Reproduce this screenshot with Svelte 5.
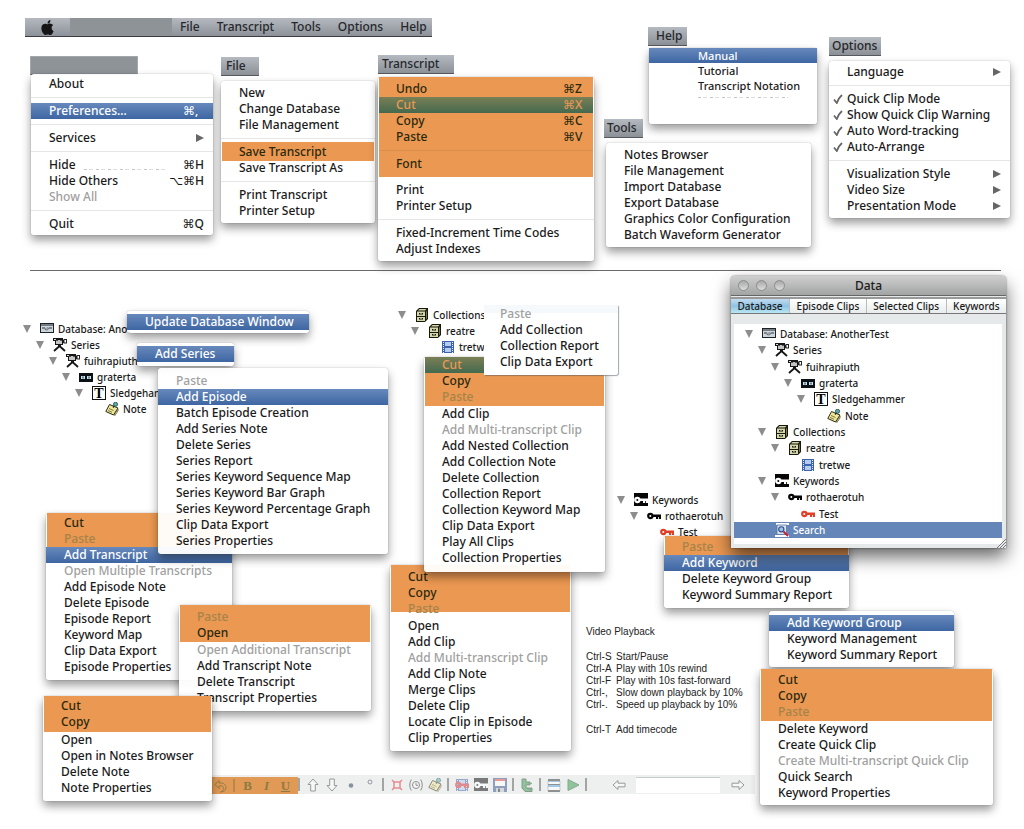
<script>
  const SEP = 'sep';
  const off = (t) => ({ t, off: true });
  const sel = (t, k) => ({ t, k, sel: true });
  const opens = (t) => ({ t, arrow: true });
  const tick = (t) => ({ t, tick: true });

  const titles = [
    { t: '', x: 30, y: 56, w: 108 },
    { t: 'File', x: 221, y: 57, w: 38, p: 5 },
    { t: 'Transcript', x: 378, y: 55, w: 76, p: 4 },
    { t: 'Help', x: 648, y: 27, w: 39, p: 8 },
    { t: 'Options', x: 829, y: 37, w: 52, p: 3 },
    { t: 'Tools', x: 604, y: 119, w: 39, p: 3 }
  ];

  const menus = [
    { name: 'Application', x: 31, y: 74, w: 182, groups: [{ top: 2, bottom: 3, items: [
      'About', SEP, sel('Preferences...', '⌘,'), SEP, opens('Services'), SEP,
      { t: 'Hide', k: '⌘H', scrap: true }, { t: 'Hide Others', k: '⌥⌘H' }, off('Show All'), SEP, { t: 'Quit', k: '⌘Q' }] }] },
    { name: 'File', x: 221, y: 81, w: 154, groups: [
      { top: 4, items: ['New', 'Change Database', 'File Management', SEP] },
      { hot: true, inset: true, items: ['Save Transcript'] },
      { bottom: 4, items: ['Save Transcript As', SEP, 'Print Transcript', 'Printer Setup'] }] },
    { name: 'Transcript', x: 378, y: 77, w: 216, groups: [
      { hot: true, top: 4, bottom: 5, items: [{ t: 'Undo', k: '⌘Z' }, sel('Cut', '⌘X'), { t: 'Copy', k: '⌘C' }, { t: 'Paste', k: '⌘V' }, SEP, 'Font'] },
      { top: 5, bottom: 4, items: ['Print', 'Printer Setup', SEP, 'Fixed-Increment Time Codes', 'Adjust Indexes'] }] },
    { name: 'Help', x: 649, y: 48, w: 168, small: true, groups: [
      { bottom: 0, items: [sel('Manual'), 'Tutorial', 'Transcript Notation'] }] },
    { name: 'Options', x: 829, y: 61, w: 181, groups: [{ top: 3, bottom: 4, items: [
      opens('Language'), SEP, tick('Quick Clip Mode'), tick('Show Quick Clip Warning'), tick('Auto Word-tracking'), tick('Auto-Arrange'), SEP,
      opens('Visualization Style'), opens('Video Size'), opens('Presentation Mode')] }] },
    { name: 'Tools', x: 606, y: 143, w: 205, groups: [{ top: 4, bottom: 4, items: [
      'Notes Browser', 'File Management', 'Import Database', 'Export Database', 'Graphics Color Configuration', 'Batch Waveform Generator'] }] },

    { name: 'Database', x: 127, y: 311, w: 182, groups: [{ top: 3, bottom: 3, items: [sel('Update Database Window')] }] },
    { name: 'Series root', x: 137, y: 343, w: 97, groups: [{ top: 3, bottom: 4, items: [sel('Add Series')] }] },
    { name: 'Episode', x: 46, y: 513, w: 186, groups: [
      { hot: true, top: 2, items: ['Cut', off('Paste')] },
      { bottom: 5, items: [sel('Add Transcript'), off('Open Multiple Transcripts'), 'Add Episode Note', 'Delete Episode',
        'Episode Report', 'Keyword Map', 'Clip Data Export', 'Episode Properties'] }] },
    { name: 'Series', x: 158, y: 368, w: 230, groups: [{ top: 5, bottom: 5, items: [
      off('Paste'), sel('Add Episode'), 'Batch Episode Creation', 'Add Series Note', 'Delete Series', 'Series Report',
      'Series Keyword Sequence Map', 'Series Keyword Bar Graph', 'Series Keyword Percentage Graph', 'Clip Data Export', 'Series Properties'] }] },
    { name: 'Transcript item', x: 179, y: 605, w: 192, groups: [
      { hot: true, top: 4, bottom: 1, items: [off('Paste'), 'Open'] },
      { bottom: 5, items: [off('Open Additional Transcript'), 'Add Transcript Note', 'Delete Transcript', 'Transcript Properties'] }] },
    { name: 'Note', x: 43, y: 696, w: 169, groups: [
      { hot: true, top: 2, bottom: 2, items: ['Cut', 'Copy'] },
      { bottom: 5, items: ['Open', 'Open in Notes Browser', 'Delete Note', 'Note Properties'] }] },
    { name: 'Clip', x: 390, y: 565, w: 181, groups: [
      { hot: true, short: true, top: 4, bottom: 1, items: ['Cut', 'Copy', off('Paste')] },
      { bottom: 5, items: ['Open', 'Add Clip', off('Add Multi-transcript Clip'), 'Add Clip Note', 'Merge Clips', 'Delete Clip',
        'Locate Clip in Episode', 'Clip Properties'] }] },
    { name: 'Collection', x: 424, y: 357, w: 181, groups: [
      { hot: true, bottom: 1, items: [sel('Cut'), 'Copy', off('Paste')] },
      { bottom: 6, items: ['Add Clip', off('Add Multi-transcript Clip'), 'Add Nested Collection', 'Add Collection Note', 'Delete Collection',
        'Collection Report', 'Collection Keyword Map', 'Clip Data Export', 'Play All Clips', 'Collection Properties'] }] },
    { name: 'Collections root', x: 484, y: 305, w: 134, near: true, groups: [{ top: 1, bottom: 5, items: [
      off('Paste'), 'Add Collection', 'Collection Report', 'Clip Data Export'] }] },
    { name: 'Keyword group', x: 664, y: 536, w: 185, groups: [
      { hot: true, top: 3, items: [off('Paste')] },
      { bottom: 5, items: [sel('Add Keyword'), 'Delete Keyword Group', 'Keyword Summary Report'] }] },
    { name: 'Keywords root', x: 769, y: 611, w: 185, groups: [{ top: 4, bottom: 4, items: [
      sel('Add Keyword Group'), 'Keyword Management', 'Keyword Summary Report'] }] },
    { name: 'Keyword', x: 760, y: 669, w: 233, groups: [
      { hot: true, top: 3, bottom: 1, items: ['Cut', 'Copy', off('Paste')] },
      { bottom: 4, items: ['Delete Keyword', 'Create Quick Clip', off('Create Multi-transcript Quick Clip'), 'Quick Search', 'Keyword Properties'] }] }
  ];

  const n = (d, icon, t, leaf = false, on = false) => ({ d, icon, t, leaf, on });
  const series = (name) => [n(0, 'db', name), n(1, 'camera', 'Series'), n(2, 'camera', 'fuihrapiuth'),
    n(3, 'tape', 'graterta'), n(4, 'text', 'Sledgehammer'), n(5, 'note', 'Note', true)];
  const collections = (d) => [n(d, 'cabinet', 'Collections'), n(d + 1, 'cabinet', 'reatre'), n(d + 2, 'film', 'tretwe', true)];
  const keywords = (d) => [n(d, 'keybox', 'Keywords'), n(d + 1, 'key', 'rothaerotuh'), n(d + 2, 'redkey', 'Test', true)];
  const full = [...series('Database: AnotherTest'), ...collections(1), ...keywords(1), n(1, 'search', 'Search', true, true)];
  const tabs = ['Database', 'Episode Clips', 'Selected Clips', 'Keywords'];

  const keys = [['Ctrl-S', 'Start/Pause'], ['Ctrl-A', 'Play with 10s rewind'], ['Ctrl-F', 'Play with 10s fast-forward'],
    ['Ctrl-,', 'Slow down playback by 10%'], ['Ctrl-.', 'Speed up playback by 10%'], ['Ctrl-T', 'Add timecode']];

  const markTools = ['undo', '|', 'bold', 'italic', 'underline'];
  const tools = ['|', 'up', 'down', 'dot', 'ring', '|', 'cross', 'clock', 'pin', '|', 'keyclip', 'keybox', 'save', '|', 'tree', '|', 'lines', 'play', '|'];
</script>

{#snippet keyShape(c)}
  <circle cx="3.3" cy="7" r="2.100" fill="none" stroke={c} stroke-width="2.200" />
  <path d="M5 5.500h9v4.500h-2V8h-.8v2H9V8H5z" fill={c} />
{/snippet}

{#snippet icon(name)}
  <svg class="icon" viewBox="0 0 14 14" aria-hidden="true">
    {#if name === 'db'}
      <rect x=".5" y="1.500" width="13" height="9" fill="#cdd5de" stroke="#1d2226" />
      <path d="M1 3h12" stroke="#1d2226" />
      <path d="M2 6h3M9 6h3" stroke="#333" />
      <path d="M5 7.500L6.500 6h2L7.500 8z" fill="#fff" stroke="#333" stroke-width=".7" />
    {:else if name === 'camera'}
      <path d="M0 0h10v7H2V3H0z" fill="#161616" />
      <path d="M3 2h6v4H3z" fill="#c4c4c4" />
      <path d="M3 2h2v1H3zM7 2h2v1H7z" fill="#555" />
      <path d="M1 1h2v1H1z" fill="#ddd" />
      <path d="M10 2h1v3h-1z" fill="#161616" />
      <rect x="11" y="1.500" width="2.500" height="3.500" fill="#fff" stroke="#222" />
      <path d="M5 7h3v2H5z" fill="#161616" />
      <path d="M6 8.500L1 13M7 8.500l5 4.500" stroke="#161616" stroke-width="1.800" fill="none" />
    {:else if name === 'tape'}
      <rect x="0" y="3" width="14" height="9" fill="#0c1116" />
      <rect x="2" y="6" width="4" height="3" fill="#c9e4ec" /><rect x="8" y="6" width="4" height="3" fill="#c9e4ec" />
      <path d="M4 6.500v2M10 6.500v2" stroke="#123" />
    {:else if name === 'text'}
      <rect x=".5" y=".5" width="13" height="13" fill="#fff" stroke="#111" />
      <text x="7" y="12" text-anchor="middle" class="tee">T</text>
    {:else if name === 'note' || name === 'pin'}
      <path d="M4.500 2.500L13 6L8.500 13L.8 9.500z" fill="#efe79a" stroke="#2a2a14" />
      <path d="M9 13l4-6v2l-3.500 5M4 6.500l4.500 2M3 8.500l4 1.800" stroke="#5f5a28" fill="none" stroke-width=".8" />
      <path d="M8 5.500L11 2" stroke="#222" stroke-width="1.200" />
      <circle cx="10.500" cy="2.300" r="2.100" fill="#5da8a0" stroke="#1d4c4c" stroke-width=".8" />
    {:else if name === 'cabinet'}
      <path d="M1 3l3-3h9v11l-3 3H1z" fill="#17170c" />
      <path d="M4.500 1h7L10 2.500H3z" fill="#d6d6ab" />
      <path d="M11 3.500l1-1v8l-1 1z" fill="#77774c" />
      <path d="M2 3.500h8V8H2zM2 9h8v4H2z" fill="#d6d6ab" />
      <path d="M4 5h4v1.500H4zM4 10h4v1.500H4z" fill="#17170c" />
      <path d="M5 5h2v.6H5zM5 10h2v.6H5z" fill="#fff" />
    {:else if name === 'film' || name === 'keyclip'}
      <rect x="1" y="1" width="12" height="12" fill="#3c63ab" />
      <path d="M4 2h6v4H4zM4 8h6v4H4z" fill="#b4cbed" />
      <path d="M2.500 2v11M11.500 2v11" stroke="#e8eefa" stroke-dasharray="1 1" />
      {#if name === 'keyclip'}{@render keyShape('#d8262c')}{/if}
    {:else if name === 'keybox'}
      <rect width="14" height="13" fill="#060606" />
      {@render keyShape('#fff')}
    {:else if name === 'key'}
      {@render keyShape('#050505')}
    {:else if name === 'redkey'}
      {@render keyShape('#df4027')}
    {:else if name === 'search'}
      <path d="M1 0h13v2H1zM0 12h14v2H0z" fill="#fff" />
      <rect x="2" y="2" width="9.500" height="9.500" fill="#d5e3f5" stroke="#5a74a0" stroke-width=".8" />
      <circle cx="6.300" cy="6.300" r="2.600" fill="#9fc0e6" stroke="#2a4f88" stroke-width="1.100" />
      <path d="M8.500 8.500L13 13" stroke="#c8202c" stroke-width="2" />
    {:else if name === 'undo'}
      <path d="M1 5.500L5 1.500v2.500c5-.5 7 2 7 4.500s-2 4.500-5.500 4.500c3-1.500 3.500-3 3-4.500S7.500 6.500 5 7v2.500z" fill="none" stroke="#3f5d38" />
    {:else if name === 'up'}
      <path d="M7 1l5 5.500H9.300V13H4.700V6.500H2z" fill="#fff" stroke="#444" />
    {:else if name === 'down'}
      <path d="M7 13l5-5.500H9.300V1H4.700v6.500H2z" fill="#fff" stroke="#444" />
    {:else if name === 'left'}
      <path d="M1 7l5-4.500v2.700h7v3.600H6v2.700z" fill="#fff" stroke="#444" />
    {:else if name === 'right'}
      <path d="M13 7L8 2.500v2.700H1v3.600h7v2.700z" fill="#fff" stroke="#444" />
    {:else if name === 'dot'}
      <circle cx="7" cy="7.500" r="2.300" fill="#20384e" />
    {:else if name === 'ring'}
      <circle cx="7" cy="4" r="2" fill="none" stroke="#345" />
    {:else if name === 'cross'}
      <rect x="4" y="4" width="6" height="6" fill="none" stroke="#e0222c" stroke-width="1.400" />
      <path d="M2 2l2 2M12 2l-2 2M2 12l2-2M12 12l-2-2" stroke="#e0222c" stroke-width="1.400" />
    {:else if name === 'clock'}
      <circle cx="7" cy="7" r="3.500" fill="#fff" stroke="#333" />
      <path d="M7 5v2.300h2M2.300 1.500Q-.8 7 2.300 12.500M11.700 1.500Q14.800 7 11.700 12.500" fill="none" stroke="#333" />
    {:else if name === 'save'}
      <path d="M0 0h14v14H0z" fill="#34508f" />
      <path d="M2 1h10v7H2z" fill="#fff" /><path d="M2 1h10v2H2z" fill="#e5434a" />
      <path d="M3 10h8v4H3z" fill="#b9c4d2" /><path d="M5 10.500h2V14H5z" fill="#222" />
    {:else if name === 'tree'}
      <path d="M2 1h4v3h4v3H6v3h6v3.500H5L2 10z" fill="#2f9b45" stroke="#26472d" />
      <path d="M8 4.500l4 1M7 10l5 2" stroke="#1d5c2c" />
    {:else if name === 'lines'}
      <rect x="1" y="1" width="12" height="13" fill="#fff" />
      <path d="M1 1h12v2H1zM1 6h12v1H1zM1 12h12v2H1z" fill="#333" /><path d="M1 3h12v1H1zM1 7h12v2H1z" fill="#58a0e0" />
      <path d="M1 3v10M13 3v10" stroke="#777" stroke-width=".6" />
    {:else if name === 'play'}
      <path d="M2 1.500L13 7L2 12.500z" fill="#2c9c48" stroke="#25602f" />
    {/if}
  </svg>
{/snippet}

{#snippet tree(nodes)}
  {#each nodes as r}
    <li class="node" class:on={r.on} style="--depth:{r.d}">
      <button>
        <span class="twist">{#if !r.leaf}<svg viewBox="0 0 8 8" aria-hidden="true"><path d="M0 0h8L4 8z" fill="#8d8d8d" /></svg>{/if}</span>
        {@render icon(r.icon)}
        <span class="cap">{r.t}</span>
      </button>
    </li>
  {/each}
{/snippet}

{#snippet tool(name)}
  {#if name === '|'}
    <span class="bar"></span>
  {:else if name === 'bold'}
    <button class="serif" aria-label="Bold"><b>B</b></button>
  {:else if name === 'italic'}
    <button class="serif" aria-label="Italic"><i>I</i></button>
  {:else if name === 'underline'}
    <button class="serif" aria-label="Underline"><u>U</u></button>
  {:else}
    <button aria-label={name}>{@render icon(name)}</button>
  {/if}
{/snippet}

<main>
  <nav class="menubar">
    <button class="apple" aria-label="Apple menu">
      <svg viewBox="0 0 24 24" aria-hidden="true"><path fill="#151515" d="M12.152 6.896c-.948 0-2.415-1.078-3.960-1.040-2.040.027-3.910 1.183-4.961 3.014-2.117 3.675-.546 9.103 1.519 12.090 1.013 1.454 2.208 3.090 3.792 3.039 1.520-.065 2.090-.987 3.935-.987 1.831 0 2.350.987 3.960.948 1.637-.026 2.676-1.480 3.676-2.948 1.156-1.688 1.636-3.325 1.662-3.415-.039-.013-3.182-1.221-3.220-4.857-.026-3.040 2.480-4.494 2.597-4.559-1.429-2.090-3.623-2.324-4.390-2.376-2-.156-3.675 1.090-4.610 1.090zM15.530 3.830c.843-1.012 1.400-2.427 1.245-3.830-1.207.052-2.662.805-3.532 1.818-.780.896-1.454 2.338-1.273 3.714 1.338.104 2.715-.688 3.559-1.701" /></svg>
    </button>
    <span class="blank"></span>
    {#each ['File', 'Transcript', 'Tools', 'Options', 'Help'] as t}<button>{t}</button>{/each}
  </nav>
  <hr />

  {#each titles as t}
    <div class="title" class:empty={!t.t} style="left:{t.x}px;top:{t.y}px;width:{t.w}px;padding-left:{t.p ?? 0}px">{t.t}</div>
  {/each}

  <ul class="tree loose" style="left:22px;top:321px">{@render tree(series('Database: Anot'))}</ul>
  <ul class="tree loose" style="left:397px;top:307px">{@render tree(collections(0))}</ul>
  <ul class="tree loose" style="left:616px;top:492px">{@render tree(keywords(0))}</ul>

  <div class="toolbar">
    <div class="marked">{#each markTools as t}{@render tool(t)}{/each}</div>
    {#each tools as t}{@render tool(t)}{/each}
    <div class="find">
      <button aria-label="Previous">{@render icon('left')}</button>
      <input aria-label="Find" />
      <button aria-label="Next">{@render icon('right')}</button>
    </div>
  </div>

  <section class="keys">
    <h2>Video Playback</h2>
    <dl>
      {#each keys as [k, t], i}
        <div class:apart={i === 5}><dt>{k}</dt><dd>{t}</dd></div>
      {/each}
    </dl>
  </section>

  {#each menus as m}
    <div class="menu" class:small={m.small} class:near={m.near} role="menu" aria-label={m.name} style="left:{m.x}px;top:{m.y}px;width:{m.w}px">
      {#each m.groups as g}
        <div class="group" class:hot={g.hot} class:inset={g.inset} class:short={g.short} style="padding-top:{g.top ?? 0}px;padding-bottom:{g.bottom ?? 0}px">
          {#each g.items as it}
            {#if it === SEP}
              <div class="sep"></div>
            {:else}
              <button role="menuitem" class="item" class:sel={it.sel} class:off={it.off}>
                <span class="mark">{#if it.tick}<svg viewBox="0 0 10 10" aria-hidden="true"><path d="M1 5.500L3.800 9Q5.500 4 9 1" fill="none" stroke="#666" stroke-width="1.800" /></svg>{/if}</span>
                <span class="label">{it.t ?? it}</span>
                {#if it.scrap}<span class="scrap"></span>{/if}
                {#if it.k}<span class="short-key">{it.k}</span>{/if}
                {#if it.arrow}<svg class="more" viewBox="0 0 8 8" aria-hidden="true"><path d="M0 0L8 4L0 8z" fill="#666" /></svg>{/if}
              </button>
            {/if}
          {/each}
        </div>
      {/each}
      {#if m.small}<span class="scrap wide"></span>{/if}
    </div>
  {/each}

  <section class="window">
    <header>
      <span class="lights"><i></i><i></i><i></i></span>
      <h1>Data</h1>
    </header>
    <div class="tabs" role="tablist">
      {#each tabs as t, i}<button role="tab" aria-selected={i === 0} class:current={i === 0}>{t}</button>{/each}
    </div>
    <div class="pane">
      <ul class="tree">{@render tree(full)}</ul>
    </div>
    <svg class="grip" viewBox="0 0 10 10" aria-hidden="true"><path d="M1 10L10 1M4 10L10 4M7 10L10 7" stroke="#777" /></svg>
  </section>
</main>

<style>
  :global(body) { margin: 0; background: #fff; }
  main {
    position: relative;
    min-height: 829px;
    overflow: hidden;
    font: 500 12px/16px "Noto Sans", "Open Sans", "DejaVu Sans", sans-serif;
    color: #1a1a1a;
  }
  button {
    font: inherit;
    color: inherit;
    background: none;
    border: 0;
    padding: 0;
    margin: 0;
    text-align: left;
    white-space: nowrap;
  }
  ul, dl, dd, h1, h2 { margin: 0; padding: 0; list-style: none; font: inherit; }
  .icon { width: 14px; height: 14px; flex: none; display: block; }

  .menubar {
    display: flex;
    align-items: stretch;
    gap: 17px;
    width: fit-content;
    height: 18px;
    margin: 18px 0 0 25px;
    padding-right: 5px;
    background: linear-gradient(#b5b9bf, #8d929a);
    border-bottom: 1px solid #3a3c40;
    color: #26282b;
  }
  .apple { width: 45px; display: flex; align-items: center; justify-content: center; margin-right: -17px; }
  .apple svg { width: 15px; height: 15px; }
  .blank { width: 102px; background: #8e9397; margin-right: -9px; }
  hr { border: 0; height: 1px; background: #6a6a6a; margin: 233px 23px 0 30px; }

  .title {
    position: absolute;
    box-sizing: border-box;
    height: 19px;
    line-height: 17px;
    color: #26282b;
    background: linear-gradient(#b5bac1, #8c9198);
    border-bottom: 1px solid #55585c;
  }
  .title.empty { background: #8e9397; border: 1px solid #a4a8ab; border-bottom-color: #55585c; }

  .menu {
    position: absolute;
    background: rgba(255, 255, 255, 0.95);
    border-radius: 3px;
    box-shadow: 0 0 1px rgba(0, 0, 0, 0.5), 0 5px 10px rgba(0, 0, 0, 0.4);
  }
  .menu.near { border-radius: 0 0 3px 0; box-shadow: 1px 1px 1px rgba(70, 80, 95, 0.5); background: linear-gradient(#f6f9fc 8px, #fff 8px); }
  .near .mark { width: 16px; }
  .item { display: flex; align-items: center; width: 100%; height: 16px; }
  .mark { width: 18px; flex: none; display: flex; justify-content: center; }
  .mark svg { width: 10px; height: 10px; }
  .short-key { margin-left: auto; margin-right: 9px; min-width: 21px; font-family: "Noto Sans", "DejaVu Sans", sans-serif; }
  .more { width: 8px; height: 8px; margin-left: auto; margin-right: 9px; }
  .sep { height: 11px; background: linear-gradient(#e6e6e6, #e6e6e6) 0 5px / 100% 1px no-repeat; }
  .off { color: #a0a0a0; }
  .sel { color: #fff; background: linear-gradient(#6789bc, #3e66a2); }
  .hot { background: #eb9852; color: #29290f; margin: 0 1px; }
  .hot .mark { width: 17px; }
  .hot .off { color: #a5844a; }
  .hot .sel { color: #eb9852; background: linear-gradient(#7a7f55, #44694f); }
  .hot .sep { background-image: linear-gradient(#dd8d4a, #dd8d4a); }
  .inset { box-shadow: 0 -2px #eb9852, 0 1px #eb9852; }
  .short { background: linear-gradient(#eb9852, #eb9852) 0 0 / 100% calc(100% - 6px) no-repeat; }
  .small { font-size: 11px; padding-bottom: 31px; }
  .small .item { height: 15px; }
  .small .mark { width: 49px; }
  .scrap { width: 82px; height: 1px; margin: 8px 0 0 8px; background: repeating-linear-gradient(90deg, #c4c4c4 0 3px, #fff 3px 5px, #ddd 5px 9px, #fff 9px 12px); }
  .wide { position: absolute; left: 49px; top: 49px; margin: 0; width: 90px; }

  .tree { font-size: 10px; }
  .loose { position: absolute; }
  .node { padding-left: calc(var(--depth) * 13px); }
  .node button { display: flex; align-items: center; height: 16px; width: 100%; }
  .twist { width: 18px; flex: none; display: flex; }
  .twist svg { width: 8px; height: 8px; margin-left: 1px; }
  .cap { margin-left: 4px; }
  .tee { font: bold 14px "Liberation Serif", serif; }
  .on { background: #6586b9; color: #fff; }

  .window {
    position: absolute;
    left: 731px;
    top: 276px;
    width: 275px;
    background: #e6e9e9;
    border-radius: 4px 4px 0 0;
    box-shadow: 0 0 2px rgba(0, 0, 0, 0.6), 0 9px 18px rgba(0, 0, 0, 0.6);
  }
  .window header {
    display: grid;
    grid-template-columns: 1fr auto 1fr;
    align-items: center;
    height: 19px;
    border-radius: 4px 4px 0 0;
    background: linear-gradient(#cfcfcf, #a2a4a4);
    border-bottom: 1px solid #666;
  }
  .lights { display: flex; gap: 7px; padding-left: 7px; }
  .lights i { width: 11px; height: 11px; box-sizing: border-box; border-radius: 50%; border: 1px solid #8d8d8d; background: linear-gradient(#a9a9a9, #dcdcdc); }
  .tabs {
    display: flex;
    height: 14px;
    margin-top: 1px;
    border-top: 2px solid #999;
    border-bottom: 1px solid #777;
    background: linear-gradient(#fff, #e9ecec);
    font-size: 10px;
    line-height: 14px;
  }
  .tabs button { flex: auto; text-align: center; border-left: 1px solid #bbb; }
  .tabs .current { background: linear-gradient(#c3dcf1, #8fc3e2 50%, #b9e6f5); border-left: 0; }
  .pane { padding: 10px 4px 4px 3px; }
  .pane .tree { display: grid; grid-auto-rows: 1fr; min-height: 212px; padding: 2px 0 6px; background: #fff; }
  .pane .node { padding-left: calc(10px + var(--depth) * 13px); display: flex; align-items: center; }
  .grip { position: absolute; right: 0; bottom: 0; width: 10px; height: 10px; }

  .keys { position: absolute; left: 586px; top: 626px; font: 10px/12px "Liberation Sans", Arial, sans-serif; color: #222; }
  .keys h2 { margin-bottom: 13px; }
  .keys dl div { display: flex; }
  .keys dt { width: 30px; }
  .keys .apart { margin-top: 13px; }

  .toolbar {
    position: absolute;
    left: 200px;
    top: 775px;
    display: flex;
    align-items: center;
    height: 19px;
    padding-left: 11px;
    background: #eeefef;
  }
  .toolbar .icon { margin: 0 auto; opacity: 0.5; }
  .toolbar button { width: 19px; flex: none; }
  .toolbar .bar { width: 2px; height: 13px; margin: 0 3px; background: #a3a5a5; }
  .marked { display: flex; align-items: center; height: 17px; margin-top: 2px; padding-right: 3px; background: #e19a55; }
  .marked .bar { background: #b98650; }
  .toolbar .marked + .bar { margin-left: 0; }
  .toolbar .serif { text-align: center; font: bold 13px/16px "Liberation Serif", serif; color: #8d7a45; }
  .find { display: flex; align-items: center; margin-left: 19px; gap: 8px; padding-right: 8px; }
  .find input { box-sizing: border-box; width: 84px; height: 16px; border: 0; border-top: 1px solid #c5cccc; padding: 0 4px; background: #fff; font: inherit; }
</style>
